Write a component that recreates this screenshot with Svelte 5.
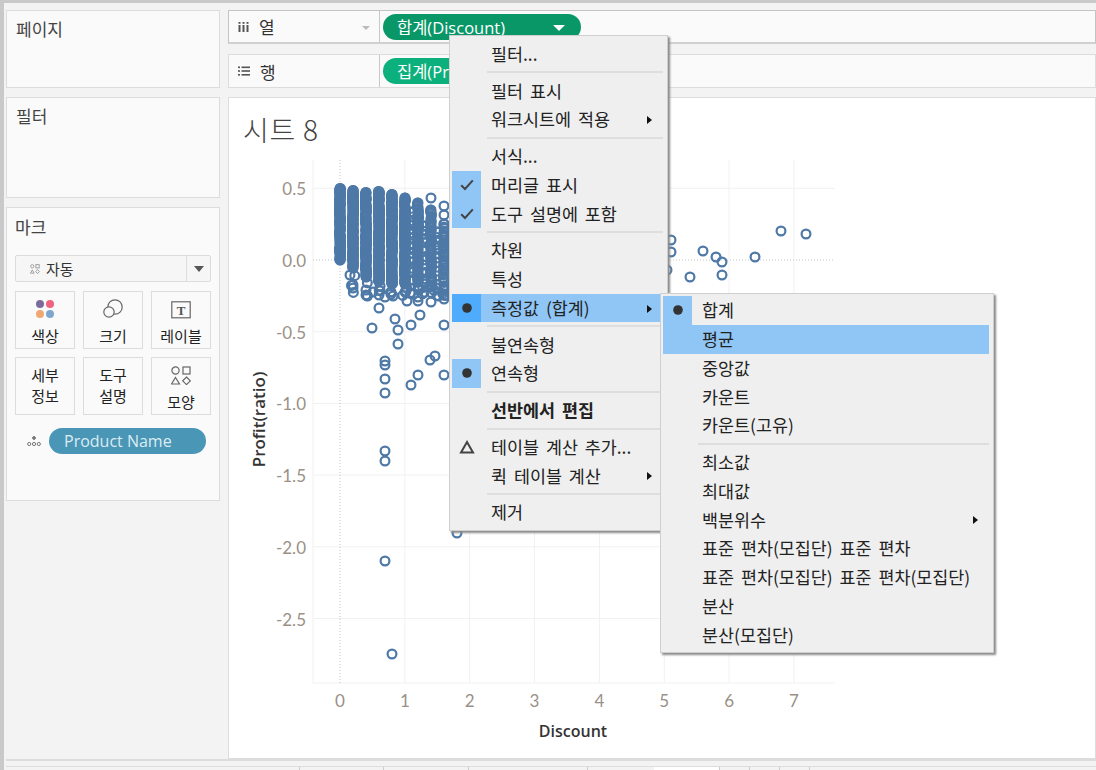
<script>
  // seeded so the scatter stays the same between runs
  let seed = 1234;
  function rnd() {
    seed = (seed * 1664525 + 1013904223) % 4294967296;
    return seed / 4294967296;
  }

  const xTicks = [0, 1, 2, 3, 4, 5, 6, 7];
  const yTicks = ["0.5", "0.0", "-0.5", "-1.0", "-1.5", "-2.0", "-2.5"];
  const xAt = (v) => 340 + v * 64.85;
  const yAt = (i) => 188.3 + i * 71.7;

  const points = [];
  // [x, top, bottom, step] of the dense discount columns
  const columns = [
    [340, 188.5, 260, 0.7],
    [353, 190.5, 268, 0.7],
    [366, 192.5, 277, 0.7],
    [379, 191.5, 281, 0.7],
    [392, 194.5, 284, 0.7],
    [405, 198, 284, 0.8],
    [418, 203, 282, 1.3],
    [431, 210, 282, 1.8],
    [444, 224, 290, 2.4],
    [425, 226, 284, 5],
    [412, 212, 280, 5],
    [437, 232, 288, 6]
  ];
  for (const [x, top, bottom, step] of columns) {
    for (let y = top; y < bottom; y += step * (0.5 + rnd())) points.push([x + (rnd() - 0.5) * 1.2, y]);
    points.push([x, top], [x, bottom]);
    // rings that trail off under each column
    if (x > 340) {
      for (let i = 0; i < 3; i++) points.push([x + (rnd() - 0.5) * 6, bottom + 2 + rnd() * (294 - bottom)]);
    }
  }
  const loose = [
    [350, 275], [353, 285], [353, 288], [366, 290], [366, 295], [373, 292], [379, 295], [385, 297],
    [393, 296], [405, 292], [407, 301], [418, 297], [418, 301], [431, 302], [444, 299], [431, 198],
    [444, 206], [444, 215], [379, 308], [372, 328], [395, 319], [398, 330], [398, 344], [411, 325],
    [420, 315], [444, 325], [385, 361], [385, 365], [385, 379], [385, 393], [411, 385], [418, 375],
    [430, 360], [435, 356], [444, 375], [385, 451], [385, 461], [457, 533], [385, 561], [392, 654],
    [671, 240], [671, 252], [703, 251], [716, 257], [722, 262], [722, 275], [690, 277], [755, 257],
    [781, 231], [806, 234], [667, 270]
  ];
  points.push(...loose);

  const fieldMenu = [
    { label: "필터..." },
    { sep: true },
    { label: "필터 표시" },
    { label: "워크시트에 적용", arrow: true },
    { sep: true },
    { label: "서식..." },
    { label: "머리글 표시", icon: "check" },
    { label: "도구 설명에 포함", icon: "check" },
    { sep: true },
    { label: "차원" },
    { label: "특성" },
    { label: "측정값 (합계)", icon: "dot", arrow: true, active: true },
    { sep: true },
    { label: "불연속형" },
    { label: "연속형", icon: "dot" },
    { sep: true },
    { label: "선반에서 편집", bold: true },
    { sep: true },
    { label: "테이블 계산 추가...", icon: "delta" },
    { label: "퀵 테이블 계산", arrow: true },
    { sep: true },
    { label: "제거" }
  ];

  const measureMenu = [
    { label: "합계", icon: "dot" },
    { label: "평균", hover: true },
    { label: "중앙값" },
    { label: "카운트" },
    { label: "카운트(고유)" },
    { sep: true },
    { label: "최소값" },
    { label: "최대값" },
    { label: "백분위수", arrow: true },
    { label: "표준 편차(모집단) 표준 편차" },
    { label: "표준 편차(모집단) 표준 편차(모집단)" },
    { label: "분산" },
    { label: "분산(모집단)" }
  ];

  const tabStops = [299, 383, 468, 587, 654, 719, 749, 779, 809];
</script>

{#snippet menuList(items)}
  {#each items as item}
    {#if item.sep}
      <div class="sep"></div>
    {:else}
      <div class="item" class:hover={item.hover} class:active={item.active} class:bold={item.bold}>
        <span class="cell" class:on={item.icon === "check" || item.icon === "dot"}>
          {#if item.icon === "check"}
            <svg width="14" height="12" viewBox="0 0 14 12"><path d="M1.2 6.2l3.8 3.8 7.8-8.6" fill="none" stroke="#444" stroke-width="2" /></svg>
          {:else if item.icon === "dot"}
            <svg width="12" height="12" viewBox="0 0 12 12"><circle cx="6" cy="6" r="4.8" fill="#333" /></svg>
          {:else if item.icon === "delta"}
            <svg width="16" height="14" viewBox="0 0 16 14"><path d="M8 2L14 12.5H2z" fill="none" stroke="#444" stroke-width="2" /></svg>
          {/if}
        </span>
        <span class="label">{item.label}</span>
        {#if item.arrow}<span class="arrow"></span>{/if}
      </div>
    {/if}
  {/each}
{/snippet}

<div class="app">
  <div class="frame">
    <div class="main">
      <aside class="side">
        <section class="card pages"><h2>페이지</h2></section>
        <section class="card filters"><h2>필터</h2></section>
        <section class="card marks">
          <h2>마크</h2>
          <div class="mark-select">
            <svg class="auto" width="10" height="10" viewBox="0 0 11 11">
              <g fill="none" stroke="#999" stroke-width="1">
                <circle cx="2.5" cy="2.5" r="1.8" /><rect x="6.5" y="0.7" width="3.6" height="3.6" />
                <path d="M2.5 6.5l2 3.6h-4z" /><path d="M8.3 6l2 2.3-2 2.3-2-2.3z" />
              </g>
            </svg>
            <span class="mark-name">자동</span>
            <span class="mark-drop"><i></i></span>
          </div>
          <div class="mark-grid">
            <div class="mark-btn">
              <svg width="20" height="20" viewBox="0 0 20 20">
                <circle cx="5" cy="5" r="4" fill="#7d6a9c" /><circle cx="15" cy="5" r="4" fill="#f0637f" />
                <circle cx="5" cy="15" r="4" fill="#efa873" /><circle cx="15" cy="15" r="4" fill="#7fa6cf" />
              </svg>
              <span>색상</span>
            </div>
            <div class="mark-btn">
              <svg width="22" height="20" viewBox="0 0 22 20" fill="none" stroke="#666" stroke-width="1.2">
                <circle cx="13" cy="8" r="7.2" /><circle cx="7" cy="13" r="5.2" fill="#fafafa" />
              </svg>
              <span>크기</span>
            </div>
            <div class="mark-btn">
              <svg width="20" height="18" viewBox="0 0 20 18">
                <rect x="0.8" y="0.8" width="18.4" height="16" fill="none" stroke="#666" stroke-width="1.2" />
                <text x="10" y="13.5" text-anchor="middle" class="t-glyph">T</text>
              </svg>
              <span>레이블</span>
            </div>
            <div class="mark-btn two"><span>세부<br />정보</span></div>
            <div class="mark-btn two"><span>도구<br />설명</span></div>
            <div class="mark-btn">
              <svg width="20" height="19" viewBox="0 0 20 19" fill="none" stroke="#666" stroke-width="1.2">
                <circle cx="4.5" cy="4.5" r="3.6" /><rect x="12" y="1" width="7" height="7" />
                <path d="M4.5 11.5l4 6.5h-8z" /><path d="M15.5 11l3.8 3.8-3.8 3.8-3.8-3.8z" />
              </svg>
              <span>모양</span>
            </div>
          </div>
          <div class="mark-field">
            <svg width="14" height="12" viewBox="0 0 14 12" fill="none" stroke="#777" stroke-width="1">
              <circle cx="7" cy="3" r="1.4" fill="#777" /><circle cx="2.2" cy="9" r="1.6" /><circle cx="7" cy="9" r="1.6" /><circle cx="11.8" cy="9" r="1.6" />
            </svg>
            <span class="pill detail">Product Name</span>
          </div>
        </section>
      </aside>

      <div class="work">
        <div class="shelf cols">
          <div class="shelf-label">
            <svg width="11" height="10" viewBox="0 0 11 10" fill="#555">
              <rect x="0.5" y="0" width="2" height="1.8" /><rect x="4.5" y="0" width="2" height="1.8" /><rect x="8.5" y="0" width="2" height="1.8" />
              <rect x="0.5" y="3" width="2" height="7" /><rect x="4.5" y="3" width="2" height="7" /><rect x="8.5" y="3" width="2" height="7" />
            </svg>
            <span>열</span>
            <i class="shelf-caret"></i>
          </div>
          <div class="shelf-body"><span class="pill measure dark">합계(Discount)<i></i></span></div>
        </div>
        <div class="shelf rows">
          <div class="shelf-label">
            <svg width="12" height="10" viewBox="0 0 12 10" fill="#555">
              <rect x="0" y="0.5" width="2" height="1.6" /><rect x="3.5" y="0.5" width="8.5" height="1.6" />
              <rect x="0" y="4.2" width="2" height="1.6" /><rect x="3.5" y="4.2" width="8.5" height="1.6" />
              <rect x="0" y="8" width="2" height="1.6" /><rect x="3.5" y="8" width="8.5" height="1.6" />
            </svg>
            <span>행</span>
          </div>
          <div class="shelf-body"><span class="pill measure">집계(Profit(ratio))</span></div>
        </div>

        <section class="view">
          <h1>시트 8</h1>
          <svg class="chart" width="640" height="612" viewBox="228 147 640 612">
            {#each xTicks.slice(1) as t}
              <line class="grid" x1={xAt(t)} x2={xAt(t)} y1="160" y2="683" />
            {/each}
            {#each yTicks as t, i}
              {#if t !== "0.0"}<line class="grid" x1="313" x2="835" y1={yAt(i)} y2={yAt(i)} />{/if}
            {/each}
            <line class="grid" x1="313" x2="313" y1="160" y2="683" />
            <line class="grid" x1="313" x2="835" y1="683" y2="683" />
            <line class="zero" x1="340" x2="340" y1="160" y2="683" />
            <line class="zero" x1="313" x2="835" y1="260" y2="260" />

            {#each points as p}
              <circle class="mark" cx={p[0]} cy={p[1]} r="4.4" />
            {/each}

            {#each yTicks as t, i}
              <text class="tick" x="306" y={yAt(i) + 7} text-anchor="end">{t}</text>
            {/each}
            {#each xTicks as t}
              <text class="tick" x={xAt(t)} y="707" text-anchor="middle">{t}</text>
            {/each}
            <text class="axis" x="573" y="736.5" text-anchor="middle">Discount</text>
            <text class="axis profit" transform="translate(265 419.5) rotate(-90)" text-anchor="middle">Profit(ratio)</text>
          </svg>
        </section>
      </div>
    </div>

    <footer class="tabs">
      <div class="tab-row">
        {#each tabStops as stop, i}
          <span class="tab-stop" class:current={i === 4} style="left: {stop}px; width: {i === 4 ? 65 : 1}px"></span>
        {/each}
      </div>
    </footer>
  </div>

  <div class="menu field-menu">{@render menuList(fieldMenu)}</div>
  <div class="menu measure-menu">{@render menuList(measureMenu)}</div>
</div>

<style>
  :global(body) {
    margin: 0;
    background: #f3f3f3;
  }

  .app {
    position: relative;
    width: 1096px;
    height: 770px;
    overflow: hidden;
    font-family: "Noto Sans CJK KR", "Open Sans", sans-serif;
    color: #333;
  }

  .frame {
    box-sizing: border-box;
    width: 1096px;
    height: 770px;
    border-top: 3px solid #c9c9c9;
    border-left: 4px solid #c9c9c9;
    padding: 7px 0 0 2px;
    display: flex;
    flex-direction: column;
  }

  .main {
    display: grid;
    grid-template-columns: 214px 1fr;
    column-gap: 8px;
    height: 749px;
  }

  /* Left cards */
  .side {
    display: flex;
    flex-direction: column;
    gap: 9px;
  }
  .card {
    box-sizing: border-box;
    background: #fafafa;
    border: 1px solid #dcdcdc;
    padding: 6px 9px;
  }
  .card h2 {
    margin: 0;
    font-size: 17px;
    font-weight: 400;
    line-height: 24px;
    color: #444;
  }
  .pages { height: 78px; }
  .filters { height: 101px; }
  .marks {
    height: 294px;
    padding: 7px 8px;
  }

  .mark-select {
    margin: 16px 0 0 0;
    height: 27px;
    box-sizing: border-box;
    border: 1px solid #dcdcdc;
    border-radius: 2px;
    background: #f6f6f6;
    display: flex;
    align-items: center;
    font-size: 15px;
  }
  .auto { margin-left: 14px; }
  .mark-name {
    margin-left: 6px;
    flex: 1;
  }
  .mark-drop {
    width: 23px;
    height: 25px;
    border-left: 1px solid #dcdcdc;
    display: flex;
    align-items: center;
    justify-content: center;
  }
  .mark-drop i {
    border: 5px solid transparent;
    border-top: 6px solid #555;
    border-bottom: 0;
  }

  .mark-grid {
    margin-top: 9px;
    display: grid;
    grid-template-columns: repeat(3, 60px);
    grid-auto-rows: 58px;
    gap: 8px;
  }
  .mark-btn {
    box-sizing: border-box;
    border: 1px solid #dcdcdc;
    display: flex;
    flex-direction: column;
    align-items: center;
    justify-content: flex-end;
    padding-bottom: 0;
    font-size: 15px;
    line-height: 24px;
    color: #222;
  }
  .mark-btn svg { margin-bottom: 5px; }
  .mark-btn.two {
    justify-content: center;
    text-align: center;
    line-height: 21px;
    padding-bottom: 2px;
  }
  .t-glyph {
    font-family: "Liberation Serif", serif;
    font-weight: 700;
    font-size: 13px;
    fill: #555;
  }

  .mark-field {
    margin: 13px 0 0 12px;
    display: flex;
    align-items: center;
    gap: 8px;
  }

  /* Pills */
  .pill {
    box-sizing: border-box;
    display: inline-flex;
    align-items: center;
    color: #fff;
    border-radius: 14px;
    height: 26px;
    font-family: "Open Sans", "Noto Sans CJK KR", sans-serif;
  }
  .detail {
    width: 157px;
    background: #4a96b6;
    padding-left: 15px;
    font-size: 16px;
    color: #dcecf3;
  }
  .measure {
    width: 198px;
    background: #0cb07c;
    padding-left: 14px;
    font-size: 16.5px;
    position: relative;
  }
  .measure.dark { background: #0a9768; }
  .measure i {
    position: absolute;
    left: 170px;
    top: 11px;
    border: 6px solid transparent;
    border-top: 6px solid #fff;
    border-bottom: 0;
  }

  /* Shelves */
  .work {
    display: flex;
    flex-direction: column;
  }
  .shelf {
    box-sizing: border-box;
    height: 34px;
    margin-bottom: 10px;
    display: flex;
    border: 1px solid #dcdcdc;
    background: #fafafa;
  }
  .shelf.rows { margin-bottom: 9px; }
  .shelf.cols {
    border-color: #c4c4c4;
    border-bottom: 2px solid #d0d0d0;
  }
  .shelf-label {
    width: 151px;
    box-sizing: border-box;
    border-right: 1px solid #c8c8c8;
    display: flex;
    align-items: center;
    padding-left: 9px;
    gap: 10px;
    font-size: 17px;
    position: relative;
  }
  .shelf-caret {
    position: absolute;
    right: 9px;
    top: 15px;
    border: 4px solid transparent;
    border-top: 4px solid #bbb;
    border-bottom: 0;
  }
  .shelf-body {
    flex: 1;
    padding-left: 3px;
    display: flex;
    align-items: center;
  }

  /* View */
  .view {
    box-sizing: border-box;
    height: 662px;
    background: #fff;
    border: 1px solid #dcdcdc;
    overflow: hidden;
  }
  .view h1 {
    margin: 0;
    height: 49px;
    padding: 12px 0 0 14px;
    box-sizing: border-box;
    font-size: 28px;
    font-weight: 300;
    line-height: 38px;
    color: #444;
    letter-spacing: 0.8px;
  }
  .chart {
    display: block;
    margin-left: -1px;
  }
  .grid {
    stroke: #f1f1f1;
    stroke-width: 1;
  }
  .zero {
    stroke: #c4c4c4;
    stroke-width: 1;
    stroke-dasharray: 1 2;
  }
  .mark {
    fill: none;
    stroke: #4e79a7;
    stroke-width: 2.2;
  }
  .tick {
    font-family: "Lato", "Open Sans", sans-serif;
    font-size: 17px;
    fill: #999188;
  }
  .axis {
    font-family: "Open Sans", sans-serif;
    font-size: 16px;
    font-weight: 600;
    fill: #333;
  }
  .axis.profit { font-size: 17px; }

  /* Bottom tabs */
  .tabs {
    flex: 1;
    border-top: 2px solid #dcdcdc;
  }
  .tab-row {
    position: relative;
    margin-top: 5px;
    height: 5px;
    border-top: 1px solid #ddd;
  }
  .tab-stop {
    position: absolute;
    top: 0;
    bottom: 0;
    margin-left: -6px;
    background: #ccc;
  }
  .tab-stop.current { background: #fff; }

  /* Context menus */
  .menu {
    position: absolute;
    box-sizing: border-box;
    background: #efefef;
    border: 1px solid #cfcfcf;
    box-shadow: 2px 2px 2px #8a8a8a;
    padding: 2px 4px 2px 2px;
    font-size: 17.4px;
    word-spacing: 3px;
    color: #222;
  }
  .field-menu {
    left: 449px;
    top: 35px;
    width: 219px;
    height: 496px;
    padding-top: 3.5px;
  }
  .measure-menu {
    left: 660px;
    top: 293px;
    width: 334px;
    height: 360px;
  }
  .item {
    display: flex;
    align-items: center;
    height: 28.75px;
    line-height: 28px;
    position: relative;
  }
  .cell {
    width: 29px;
    height: 100%;
    flex: none;
    display: flex;
    align-items: center;
    justify-content: center;
  }
  .cell.on { background: #90c6f6; }
  .label {
    margin-left: 10px;
    white-space: nowrap;
  }
  .bold .label { font-weight: 700; }
  .item.hover { background: #90c6f6; }
  .item.active { background: #90c6f6; }
  .item.active .cell { background: #4fabfb; }
  .arrow {
    position: absolute;
    right: 11px;
    top: 11px;
    border: 4px solid transparent;
    border-left: 5px solid #111;
    border-right: 0;
  }
  .sep {
    height: 2px;
    margin: 3px 0 3px 35px;
    background: #dedede;
  }
</style>
